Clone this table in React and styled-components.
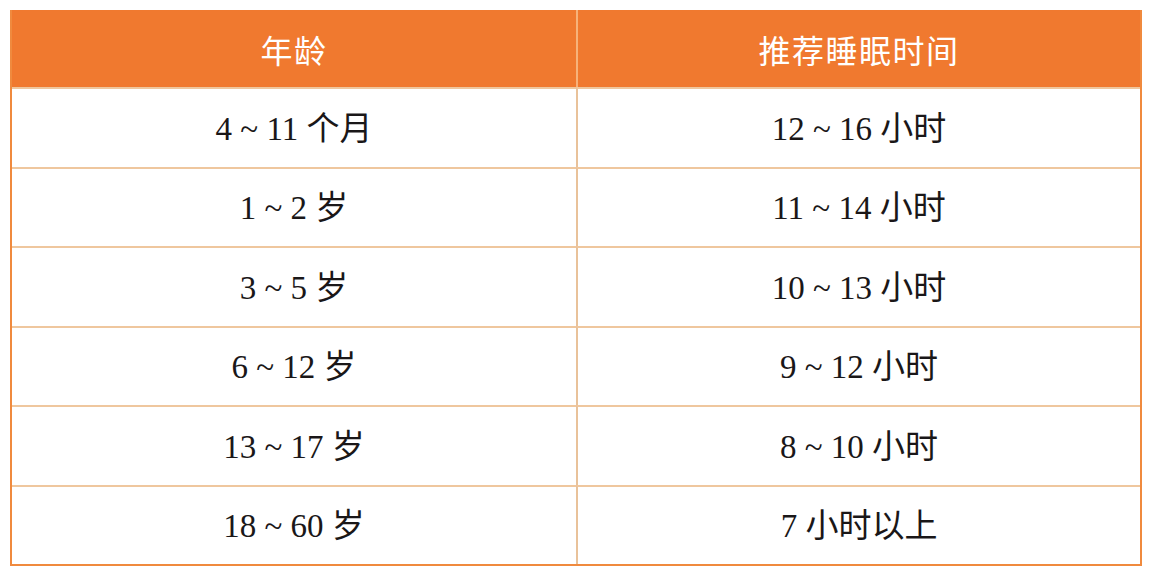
import React from "react";
import styled, { createGlobalStyle } from "styled-components";

const Global = createGlobalStyle`
  html, body { margin: 0; padding: 0; background: #ffffff; }
  * { box-sizing: border-box; }
`;

const Page = styled.div`
  padding: 10px 0 0 10px;
`;

const Table = styled.div`
  width: 1132px;
  height: 556px;
  display: grid;
  grid-template-columns: 564px 1fr;
  grid-template-rows: 77px repeat(6, 1fr);
  border: 2px solid #f08a3e;
  border-top: none;
  background: #ffffff;
`;

const HeadCell = styled.div`
  display: flex;
  align-items: center;
  justify-content: center;
  background: #f0792f;
  color: #ffffff;
  font-family: "Noto Sans CJK SC", "Noto Sans", sans-serif;
  font-size: 32px;
  font-weight: 400;
  letter-spacing: 1.5px;
  border-left: ${(p) => (p.$divider ? "2px solid #f7b27a" : "none")};
`;

const Cell = styled.div`
  display: flex;
  align-items: center;
  justify-content: center;
  border-top: 2px solid #efc79e;
  border-left: ${(p) => (p.$divider ? "2px solid #e9c29a" : "none")};
  color: #1a1718;
  font-family: "Liberation Serif", "Noto Sans CJK SC", serif;
  font-size: 33px;
  padding-bottom: 4px;
`;

const rows = [
  ["4 ~ 11 个月", "12 ~ 16 小时"],
  ["1 ~ 2 岁", "11 ~ 14 小时"],
  ["3 ~ 5 岁", "10 ~ 13 小时"],
  ["6 ~ 12 岁", "9 ~ 12 小时"],
  ["13 ~ 17 岁", "8 ~ 10 小时"],
  ["18 ~ 60 岁", "7 小时以上"],
];

export default function App() {
  return (
    <>
      <Global />
      <Page>
        <Table>
          <HeadCell>年龄</HeadCell>
          <HeadCell $divider>推荐睡眠时间</HeadCell>
          {rows.map(([a, b]) => (
            <React.Fragment key={a}>
              <Cell>{a}</Cell>
              <Cell $divider>{b}</Cell>
            </React.Fragment>
          ))}
        </Table>
      </Page>
    </>
  );
}
